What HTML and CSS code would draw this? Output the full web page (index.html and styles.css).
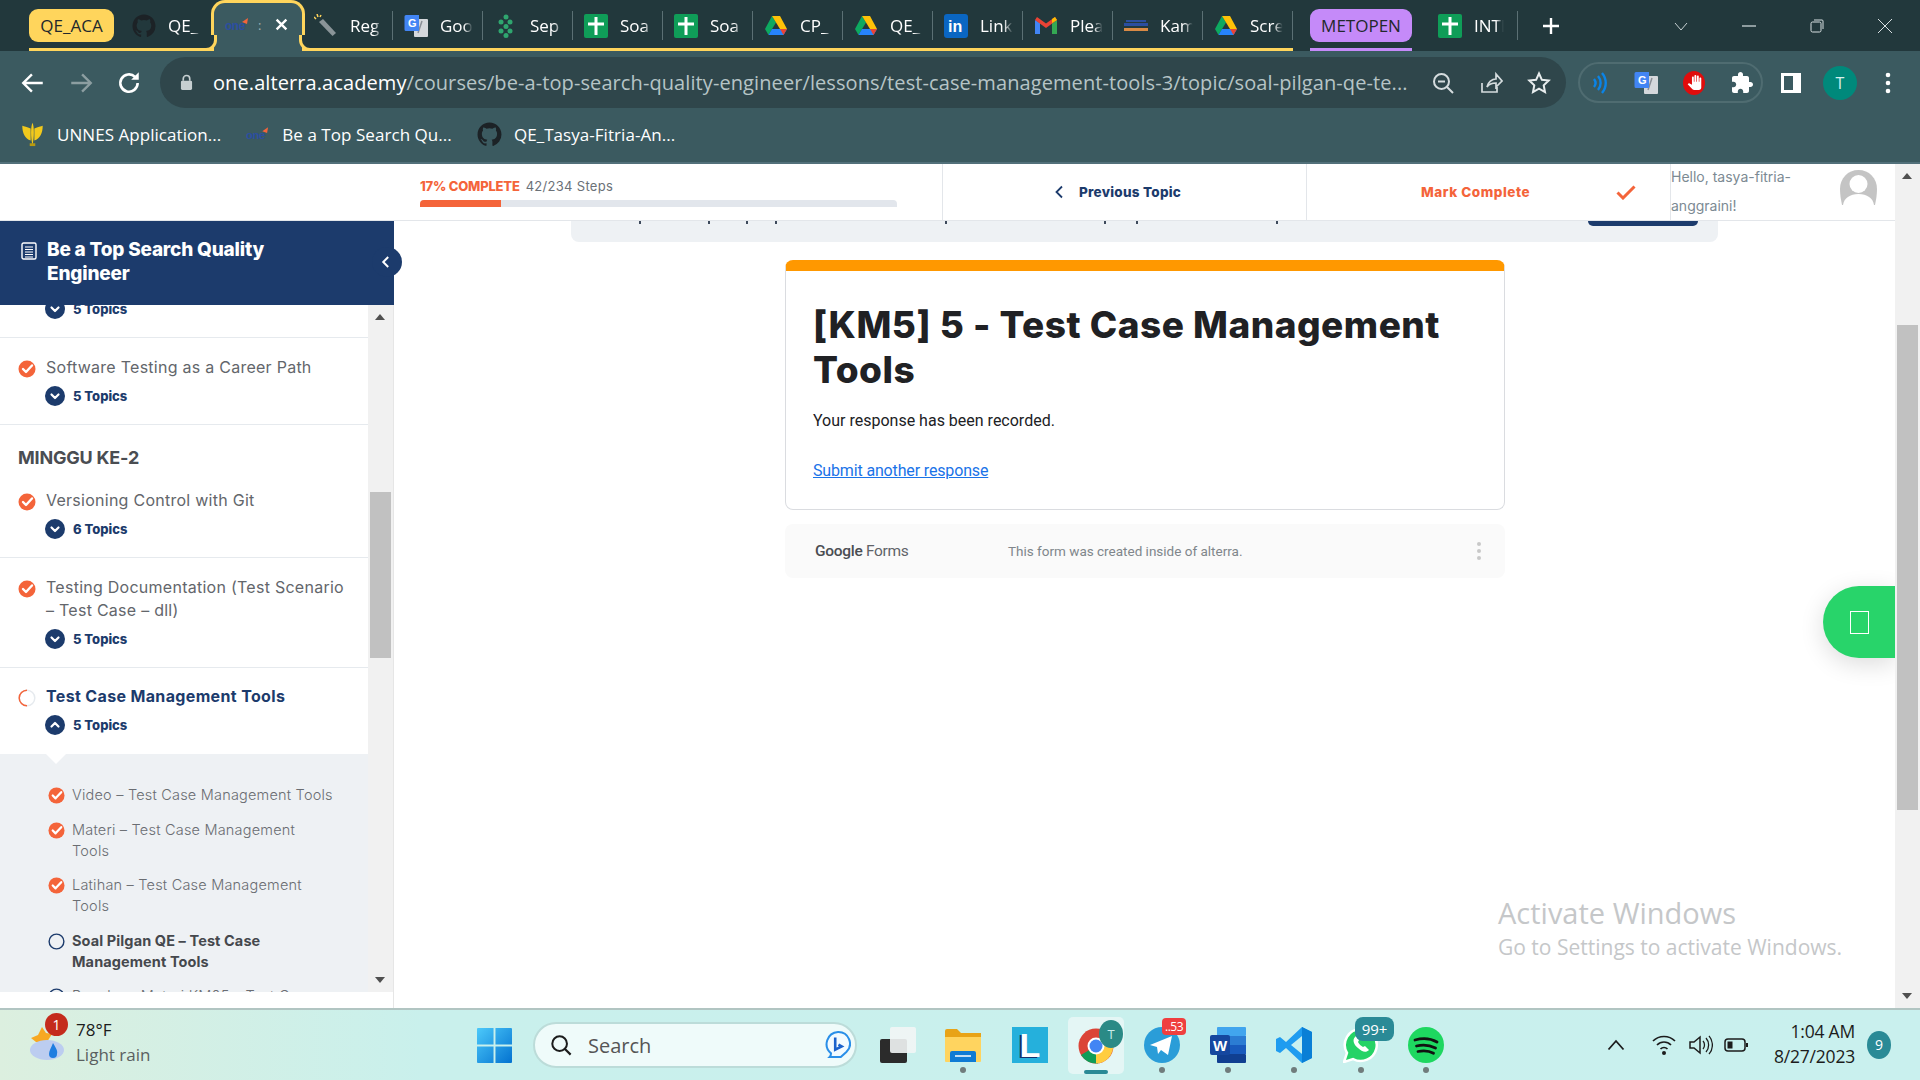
FILE: index.html
```html
<!DOCTYPE html>
<html lang="en">

<head>
    <meta charset="UTF-8">
    <title>Soal Pilgan QE - Test Case Management Tools</title>
    <link rel="stylesheet" href="styles.css">
</head>

<body>
    <svg class="defs" width="0" height="0">
        <symbol id="github" viewBox="0 0 24 24"><path d="M12 .5C5.65.5.5 5.65.5 12c0 5.08 3.29 9.39 7.86 10.91.58.1.79-.25.79-.56 0-.27-.01-1-.02-1.96-3.2.7-3.87-1.54-3.87-1.54-.52-1.33-1.28-1.68-1.28-1.68-1.04-.71.08-.7.08-.7 1.15.08 1.76 1.18 1.76 1.18 1.03 1.76 2.69 1.25 3.35.96.1-.74.4-1.25.73-1.54-2.55-.29-5.24-1.28-5.24-5.7 0-1.26.45-2.29 1.18-3.1-.12-.29-.51-1.46.11-3.05 0 0 .96-.31 3.15 1.18a10.9 10.9 0 0 1 5.74 0c2.19-1.49 3.15-1.18 3.15-1.18.62 1.59.23 2.76.11 3.05.74.81 1.18 1.84 1.18 3.1 0 4.43-2.7 5.41-5.26 5.69.41.36.78 1.06.78 2.14 0 1.54-.01 2.79-.01 3.17 0 .31.21.67.8.56A11.5 11.5 0 0 0 23.5 12C23.5 5.65 18.35.5 12 .5z" fill="#1c2226"/></symbol>
        <symbol id="sheet" viewBox="0 0 24 24"><rect x="0" y="0" width="24" height="24" rx="2" fill="#0f9d58"/><path d="M10.500 3h3v5.500H20v3h-6.500V21h-3v-9.500H4v-3h6.500z" fill="#fff"/></symbol>
        <symbol id="drive" viewBox="0 0 24 24"><path d="M8 2 1 15l3.500 6L12 8.500z" fill="#0da960"/><path d="M8 2h8l7 13h-7z" fill="#ffc107"/><path d="M4.500 21h15L23 15H8z" fill="#2684fc"/><path d="M19.500 21 23 15h-7z" fill="#ea4335"/></symbol>
        <symbol id="done" viewBox="0 0 18 18"><circle cx="9" cy="9" r="8.500" fill="#f4643a"/><path d="M5 9l3 3 6-6.500" fill="none" stroke="#fff" stroke-width="2.400" stroke-linecap="round" stroke-linejoin="round"/></symbol>
        <symbol id="down" viewBox="0 0 20 20"><circle cx="10" cy="10" r="10" fill="#1c3b6c"/><path d="M6.500 8.500 10 12l3.500-3.500" fill="none" stroke="#fff" stroke-width="2.200" stroke-linecap="round" stroke-linejoin="round"/></symbol>
        <symbol id="up" viewBox="0 0 20 20"><circle cx="10" cy="10" r="10" fill="#1c3b6c"/><path d="M6.500 11.500 10 8l3.500 3.500" fill="none" stroke="#fff" stroke-width="2.200" stroke-linecap="round" stroke-linejoin="round"/></symbol>
    </svg>

    <div class="tabstrip">
        <div class="tabs-first">
            <span class="group-chip yellow">QE_ACA</span>
            <div class="tab tab-git"><svg class="tab-icon"><use href="#github"/></svg><span class="tab-label">QE_</span></div>
        </div>
        <div class="tab-active">
            <svg class="fav-one" viewBox="0 0 24 16"><text x="0" y="13" class="one-letters">one</text><path d="M17 5l6-4-1 6z" fill="#f4643a"/></svg>
            <span class="tab-colon">:</span>
            <svg class="tab-close" viewBox="0 0 12 12"><path d="M1.500 1.500l9 9m0-9-9 9" stroke="#fff" stroke-width="2.200"/></svg>
        </div>
        <div class="tabs-yellow">
            <div class="tab"><svg class="tab-icon" viewBox="0 0 24 24"><path d="M5 8l4-3 13 14-3.500 3z" fill="#8a9498"/><path d="M2 5 0 3m4 0L3 0m3 3 1-2" stroke="#ffd55c" stroke-width="1.500"/></svg><span class="tab-label">Reg</span></div>
            <div class="tab"><svg class="tab-icon" viewBox="0 0 24 24"><rect x="10" y="5" width="14" height="18" rx="1" fill="#d5d8dc"/><path d="M14 19l4-12" stroke="#8a8f96" stroke-width="1.500"/><path d="M2 1h13v16H2a1.500 1.500 0 0 1-1.500-1.500v-13A1.500 1.500 0 0 1 2 1z" fill="#4285f4"/><text x="4" y="13" class="g-letter">G</text></svg><span class="tab-label">Goo</span></div>
            <div class="tab"><svg class="tab-icon" viewBox="0 0 24 24" fill="#2fa66f"><circle cx="12" cy="3" r="2.500"/><circle cx="7" cy="8" r="2.500"/><circle cx="16" cy="8" r="2.500"/><circle cx="12" cy="12.500" r="2.500"/><circle cx="7" cy="17" r="2.500"/><circle cx="16" cy="17" r="2.500"/><circle cx="12" cy="21.500" r="2.500"/></svg><span class="tab-label">Sep</span></div>
            <div class="tab"><svg class="tab-icon"><use href="#sheet"/></svg><span class="tab-label">Soa</span></div>
            <div class="tab"><svg class="tab-icon"><use href="#sheet"/></svg><span class="tab-label">Soa</span></div>
            <div class="tab"><svg class="tab-icon"><use href="#drive"/></svg><span class="tab-label">CP_</span></div>
            <div class="tab"><svg class="tab-icon"><use href="#drive"/></svg><span class="tab-label">QE_</span></div>
            <div class="tab"><svg class="tab-icon" viewBox="0 0 24 24"><rect width="24" height="24" rx="3" fill="#0a66c2"/><text x="4" y="18" class="in-letters">in</text></svg><span class="tab-label">Link</span></div>
            <div class="tab"><svg class="tab-icon" viewBox="0 0 24 24"><path d="M1 6v14h5V9z" fill="#4285f4"/><path d="M18 9v11h5V6z" fill="#34a853"/><path d="M1 6l11 8 11-8-2-3-9 6.500L3 3z" fill="#ea4335"/><path d="M18 9l5-3-2-3-3 2z" fill="#fbbc04"/></svg><span class="tab-label">Plea</span></div>
            <div class="tab"><svg class="tab-icon" viewBox="0 0 24 24"><rect x="2" y="6" width="20" height="2" fill="#2b4ea0"/><rect x="0" y="9" width="24" height="3" fill="#2b4ea0"/><rect x="0" y="14" width="24" height="3" fill="#d98a45"/></svg><span class="tab-label">Kam</span></div>
            <div class="tab"><svg class="tab-icon"><use href="#drive"/></svg><span class="tab-label">Scre</span></div>
        </div>
        <div class="group-purple"><span class="group-chip purple">METOPEN</span></div>
        <div class="tab tab-int"><svg class="tab-icon"><use href="#sheet"/></svg><span class="tab-label">INTI</span></div>
        <svg class="new-tab" viewBox="0 0 18 18"><path d="M9 1v16M1 9h16" stroke="#fff" stroke-width="2.400"/></svg>
        <div class="win-controls">
            <svg viewBox="0 0 14 14"><path d="M1 4l6 7 6-7" fill="none" stroke="#c8d2d4" stroke-width="1"/></svg>
            <svg viewBox="0 0 14 14"><path d="M0 7h14" stroke="#d8e0e2" stroke-width="1.200"/></svg>
            <svg viewBox="0 0 14 14"><rect x="1" y="3" width="10" height="10" rx="1.500" fill="none" stroke="#d8e0e2"/><path d="M4 1h8a1 1 0 0 1 1 1v8" fill="none" stroke="#d8e0e2"/></svg>
            <svg viewBox="0 0 14 14"><path d="M0 0l14 14M14 0 0 14" stroke="#d8e0e2" stroke-width="1"/></svg>
        </div>
    </div>

    <div class="toolbar">
        <svg class="nav-icon" viewBox="0 0 24 24"><path d="M21 12H4m7-8-8 8 8 8" fill="none" stroke="#fff" stroke-width="2.200"/></svg>
        <svg class="nav-icon" viewBox="0 0 24 24"><path d="M3 12h17m-7-8 8 8-8 8" fill="none" stroke="#8c9ea1" stroke-width="2.200"/></svg>
        <svg class="nav-icon" viewBox="0 0 24 24"><path d="M20 12a8 8 0 1 1-2.400-5.700" fill="none" stroke="#fff" stroke-width="2.400"/><path d="M21 2v7h-7z" fill="#fff"/></svg>
        <div class="omnibox">
            <svg class="lock" viewBox="0 0 14 18"><rect x="1" y="7" width="12" height="10" rx="1.500" fill="#c6cfd1"/><path d="M3.500 7V5a3.500 3.500 0 0 1 7 0v2" fill="none" stroke="#c6cfd1" stroke-width="1.800"/></svg>
            <div class="url"><span class="host">one.alterra.academy</span>/courses/be-a-top-search-quality-engineer/lessons/test-case-management-tools-3/topic/soal-pilgan-qe-te...</div>
            <svg class="omni-icon" viewBox="0 0 24 24"><circle cx="10.500" cy="10.500" r="7.500" fill="none" stroke="#d5dcde" stroke-width="2"/><path d="M16 16l6 6M7 10.500h7" stroke="#d5dcde" stroke-width="2"/></svg>
            <svg class="omni-icon" viewBox="0 0 24 24"><path d="M3 12v9h15v-5M8 16c1-5 5-8 9-8V3l6 7-6 6v-4c-4 0-7 1-9 4z" fill="none" stroke="#d5dcde" stroke-width="1.700"/></svg>
            <svg class="omni-icon" viewBox="0 0 24 24"><path d="M12 2.500l2.900 6.300 6.800.8-5 4.700 1.300 6.800-6-3.400-6 3.400 1.300-6.800-5-4.700 6.800-.8z" fill="none" stroke="#e8edee" stroke-width="2"/></svg>
        </div>
        <div class="ext-pill">
            <svg class="ext-icon" viewBox="0 0 24 24"><path d="M8 8c2 2.500 2 5.500 0 8M12 5c3.500 4 3.500 10 0 14M16 2c5 6 5 14 0 20" fill="none" stroke="#0a84e8" stroke-width="2.400"/></svg>
            <svg class="ext-icon" viewBox="0 0 24 24"><rect x="10" y="5" width="14" height="18" rx="1" fill="#d5d8dc"/><path d="M14 19l4-12" stroke="#8a8f96" stroke-width="1.500"/><path d="M2 1h13v16H2a1.500 1.500 0 0 1-1.500-1.500v-13A1.500 1.500 0 0 1 2 1z" fill="#4285f4"/><text x="4" y="13" class="g-letter">G</text></svg>
            <svg class="ext-icon" viewBox="0 0 24 24"><ellipse cx="12" cy="12" rx="11" ry="12" fill="#e00c0c"/><path transform="translate(5 4) scale(.62)" d="M23 5.500V20c0 2.200-1.800 4-4 4h-7.300c-1.080 0-2.100-.43-2.850-1.190L1 14.830s1.260-1.230 1.300-1.250c.22-.19.49-.29.79-.29.22 0 .42.06.6.16.04.01 4.310 2.460 4.310 2.460V4c0-.83.67-1.500 1.500-1.500S11 3.170 11 4v7h1V1.500c0-.83.67-1.500 1.500-1.500S15 .67 15 1.500V11h1V2.500c0-.83.67-1.500 1.500-1.500s1.500.67 1.500 1.500V11h1V5.500c0-.83.67-1.500 1.500-1.500s1.500.67 1.500 1.500z" fill="#fff"/></svg>
            <svg class="ext-icon" viewBox="0 0 24 24"><path d="M20.500 11H19V7c0-1.100-.9-2-2-2h-4V3.500C13 2.120 11.880 1 10.500 1S8 2.120 8 3.500V5H4c-1.100 0-1.990.9-1.990 2v3.800H3.500c1.490 0 2.700 1.210 2.700 2.700s-1.210 2.700-2.700 2.700H2V20c0 1.100.9 2 2 2h3.800v-1.500c0-1.490 1.210-2.700 2.700-2.700 1.490 0 2.700 1.210 2.700 2.700V22H17c1.100 0 2-.9 2-2v-4h1.500c1.380 0 2.500-1.120 2.500-2.500S21.880 11 20.500 11z" fill="#fff"/></svg>
        </div>
        <svg class="side-icon" viewBox="0 0 22 22"><path fill-rule="evenodd" d="M1 1h20v20H1zM4 4v14h9V4z" fill="#fff"/></svg>
        <span class="profile">T</span>
        <svg class="menu-dots" viewBox="0 0 6 22" fill="#fff"><circle cx="3" cy="3" r="2.300"/><circle cx="3" cy="11" r="2.300"/><circle cx="3" cy="19" r="2.300"/></svg>
    </div>

    <div class="bookmarks">
        <div class="bookmark">
            <svg class="bm-icon" viewBox="0 0 24 28"><path d="M12 2c-2 4-2 16 0 24 2-8 2-20 0-24zM10 8C6 6 3 6 1 5c0 8 3 14 9 16zM14 8c4-2 7-2 9-3 0 8-3 14-9 16z" fill="#f2c91c"/><path d="M9 24h6v3H9z" fill="#b99a10"/></svg>
            <span>UNNES Application...</span>
        </div>
        <div class="bookmark">
            <svg class="bm-icon bm-one" viewBox="0 0 24 16"><text x="0" y="13" class="one-letters">one</text><path d="M17 5l6-4-1 6z" fill="#f4643a"/></svg>
            <span>Be a Top Search Qu...</span>
        </div>
        <div class="bookmark">
            <svg class="bm-icon bm-git"><use href="#github"/></svg>
            <span>QE_Tasya-Fitria-An...</span>
        </div>
    </div>

    <main class="page">
        <div class="page-left">
            <header class="topbar">
                <div class="progress-cell">
                    <div class="progress-text"><b>17% COMPLETE</b> <span>42/234 Steps</span></div>
                    <div class="progress-track"><div class="progress-fill" style="width: 17%"></div></div>
                </div>
                <div class="prev-cell">
                    <svg viewBox="0 0 10 14"><path d="M8 1.500 2.500 7 8 12.500" fill="none" stroke="#1c3b6c" stroke-width="1.800"/></svg>
                    <span>Previous Topic</span>
                </div>
                <div class="mark-cell">
                    <span>Mark Complete</span>
                    <svg viewBox="0 0 20 16"><path d="M1.500 8.500 7 14 18.500 2.500" fill="none" stroke="#f4643a" stroke-width="3"/></svg>
                </div>
                <div class="hello-cell">
                    <div class="hello">Hello, tasya-fitria-anggraini!</div>
                    <svg class="avatar" viewBox="0 0 37 35"><path d="M18.500 0C8 0 0 8 0 19c0 6 1 11 2 16h33c1-5 2-10 2-16C37 8 29 0 18.500 0z" fill="#c4c4c4"/><circle cx="18.500" cy="14" r="9" fill="#fff"/><path d="M3 35c1-7 7-11 15.500-11S33 28 34 35z" fill="#fff"/></svg>
                </div>
            </header>

            <div class="body-row">
                <aside class="sidebar">
                    <div class="course-head">
                        <svg class="course-icon" viewBox="0 0 16 18"><rect x="1" y="1" width="14" height="16" rx="1.500" fill="none" stroke="#fff" stroke-width="1.400"/><path d="M4 5h8M4 7.500h8M4 10h8M4 12.500h8M4 15h8" stroke="#fff"/></svg>
                        <h2>Be a Top Search Quality Engineer</h2>
                        <span class="collapse">
                            <svg viewBox="0 0 10 14"><path d="M8 1.500 2.500 7 8 12.500" fill="none" stroke="#fff" stroke-width="2.200"/></svg>
                        </span>
                    </div>
                    <div class="sidebar-scroll">
                        <div class="lesson-list">
                            <div class="lesson lesson-cut">
                                <div class="topics"><svg><use href="#down"/></svg><span>5 Topics</span></div>
                            </div>
                            <div class="lesson">
                                <div class="lesson-title"><svg class="status"><use href="#done"/></svg><span>Software Testing as a Career Path</span></div>
                                <div class="topics"><svg><use href="#down"/></svg><span>5 Topics</span></div>
                            </div>
                            <h3 class="week">MINGGU KE-2</h3>
                            <div class="lesson">
                                <div class="lesson-title"><svg class="status"><use href="#done"/></svg><span>Versioning Control with Git</span></div>
                                <div class="topics"><svg><use href="#down"/></svg><span>6 Topics</span></div>
                            </div>
                            <div class="lesson">
                                <div class="lesson-title"><svg class="status"><use href="#done"/></svg><span>Testing Documentation (Test Scenario – Test Case – dll)</span></div>
                                <div class="topics"><svg><use href="#down"/></svg><span>5 Topics</span></div>
                            </div>
                            <div class="lesson lesson-open">
                                <div class="lesson-title current">
                                    <svg class="status" viewBox="0 0 18 18"><circle cx="9" cy="9" r="7.800" fill="none" stroke="#e6eaee" stroke-width="1.500"/><path d="M9 1.200A7.800 7.800 0 0 0 9 16.800" fill="none" stroke="#f4643a" stroke-width="1.500"/></svg>
                                    <span>Test Case Management Tools</span>
                                </div>
                                <div class="topics"><svg><use href="#up"/></svg><span>5 Topics</span></div>
                            </div>
                            <div class="subtopics">
                                <div class="subtopic"><svg><use href="#done"/></svg><span>Video – Test Case Management Tools</span></div>
                                <div class="subtopic"><svg><use href="#done"/></svg><span>Materi – Test Case Management Tools</span></div>
                                <div class="subtopic"><svg><use href="#done"/></svg><span>Latihan – Test Case Management Tools</span></div>
                                <div class="subtopic now"><svg viewBox="0 0 18 18"><circle cx="9" cy="9" r="7.800" fill="none" stroke="#1c3b6c" stroke-width="1.500"/></svg><span>Soal Pilgan QE – Test Case Management Tools</span></div>
                                <div class="subtopic"><svg viewBox="0 0 18 18"><circle cx="9" cy="9" r="7.800" fill="none" stroke="#1c3b6c" stroke-width="1.500"/></svg><span>Rangkum Materi KM05 – Test Case</span></div>
                            </div>
                        </div>
                        <div class="side-track">
                            <span class="arrow-up"></span>
                            <div class="side-thumb"></div>
                            <span class="arrow-down"></span>
                        </div>
                    </div>
                </aside>

                <section class="content">
                    <div class="notice">
                        <div class="notice-marks"><i></i><i></i><i></i><i></i><i></i><i></i><i></i><i></i></div>
                        <div class="notice-btn"></div>
                    </div>
                    <div class="form-card">
                        <h1>[KM5] 5 - Test Case Management Tools</h1>
                        <p>Your response has been recorded.</p>
                        <a href="#">Submit another response</a>
                    </div>
                    <div class="form-foot">
                        <div class="forms-logo"><span class="g">Google</span> Forms</div>
                        <div class="forms-note">This form was created inside of alterra.</div>
                        <svg class="forms-dots" viewBox="0 0 4 18" fill="#c8c8c8"><circle cx="2" cy="2" r="2"/><circle cx="2" cy="9" r="2"/><circle cx="2" cy="16" r="2"/></svg>
                    </div>
                    <div class="chat-float"><span></span></div>
                    <div class="watermark">
                        <div class="wm-title">Activate Windows</div>
                        <div class="wm-sub">Go to Settings to activate Windows.</div>
                    </div>
                </section>
            </div>
        </div>

        <div class="page-track">
            <span class="arrow-up"></span>
            <div class="page-thumb"></div>
            <span class="arrow-down"></span>
        </div>
    </main>

    <footer class="taskbar">
        <div class="tb-left">
            <div class="weather-icon">
                <svg viewBox="0 0 38 38"><path d="M14 4l4 6 6 1-5 8H8L3 15l7-3z" fill="#f7a823"/><ellipse cx="19" cy="27" rx="17" ry="10" fill="#bccdf0"/><path d="M25 20c3 5 5 8 4 11a4 4 0 0 1-8 0c0-3 2-6 4-11z" fill="#1f7ee0"/></svg>
                <span class="red-badge">1</span>
            </div>
            <div class="weather-text">
                <div class="temp">78°F</div>
                <div class="cond">Light rain</div>
            </div>
        </div>
        <div class="tb-center">
            <svg class="win-logo" viewBox="0 0 36 36"><defs><linearGradient id="winG" x1="0" y1="0" x2="1" y2="1"><stop offset="0" stop-color="#4cc9fa"/><stop offset="1" stop-color="#0372d0"/></linearGradient></defs><path d="M1 0h16v17H0V1a1 1 0 0 1 1-1zM19 0h16a1 1 0 0 1 1 1v16H19zM0 19h17v17H1a1 1 0 0 1-1-1zM19 19h17v16a1 1 0 0 1-1 1H19z" fill="url(#winG)"/></svg>
            <div class="search-box">
                <svg class="search-glass" viewBox="0 0 24 24"><circle cx="10.500" cy="10.500" r="8" fill="none" stroke="#1c1c1c" stroke-width="2.200"/><path d="M16 16l6.500 6.500" stroke="#1c1c1c" stroke-width="2.400"/></svg>
                <span>Search</span>
                <svg class="bing" viewBox="0 0 28 32"><path d="M14 2a12.500 12.500 0 0 1 9 21.500l-6 5.500H5c1-1 1.500-2.500 1.500-4A13 13 0 0 1 14 2z" fill="#f3fbff" stroke="#2a8fe8" stroke-width="2.200"/><path d="M11 8v13l7-3.500-3.500-2" fill="none" stroke="#1b62cc" stroke-width="2.800"/></svg>
            </div>
            <div class="app app-task"><svg viewBox="0 0 36 36"><rect x="0" y="12" width="27" height="24" rx="2" fill="#2b2b2b"/><rect x="10" y="0" width="26" height="26" rx="2" fill="#f2f5f5" fill-opacity=".9"/></svg></div>
            <div class="app app-folder running"><svg viewBox="0 0 36 36"><path d="M0 4a2 2 0 0 1 2-2h10l4 4h20v28H0z" fill="#e8a317"/><path d="M0 10h36v24a1 1 0 0 1-1 1H1a1 1 0 0 1-1-1z" fill="#ffd45f"/><path d="M5 35v-9a2 2 0 0 1 2-2h22a2 2 0 0 1 2 2v9z" fill="#0f7bd4"/><path d="M10 29h16" stroke="#fff" stroke-width="1.500"/></svg></div>
            <div class="app app-l"><span>L</span></div>
            <div class="app-tile">
                <svg viewBox="0 0 36 36"><circle cx="18" cy="18" r="17.500" fill="#db4437"/><path d="M18 18 3 27A17.500 17.500 0 0 0 20 35.400z" fill="#0f9d58"/><path d="M18 10.500h15.500A17.500 17.500 0 0 1 18 35.500z" fill="#ffcd40"/><circle cx="18" cy="18" r="8.500" fill="#fff"/><circle cx="18" cy="18" r="6.500" fill="#4285f4"/></svg>
                <span class="t-badge">T</span>
                <span class="tile-line"></span>
            </div>
            <div class="app app-tele running">
                <svg viewBox="0 0 36 36"><circle cx="18" cy="18" r="18" fill="#2a9dd8"/><path d="M6 18 28 9l-4 19-7-5-3 4-1-7z" fill="#fff"/></svg>
                <span class="tele-badge">..53</span>
            </div>
            <div class="app app-word running">
                <svg viewBox="0 0 36 36"><rect x="7" y="0" width="29" height="9" rx="1" fill="#41a5ee"/><rect x="7" y="9" width="29" height="9" fill="#2b7cd3"/><rect x="7" y="18" width="29" height="9" fill="#185abd"/><rect x="7" y="27" width="29" height="9" rx="1" fill="#103f91"/><rect x="0" y="8" width="20" height="20" rx="2" fill="#15479f"/><text x="3" y="24" class="w-letter">W</text></svg>
            </div>
            <div class="app app-code running">
                <svg viewBox="0 0 36 36"><path d="M26 0 36 5v26l-10 5L10 21l-6 5-4-2V12l4-2 6 5z" fill="#1f9cf0"/><path d="M26 9 15 18l11 9z" fill="#c8f1f0"/><path d="M26 0 36 5v26l-10 5z" fill="#0a7fd6"/></svg>
            </div>
            <div class="app app-wa running">
                <svg viewBox="0 0 36 36"><path d="M18 2a16 16 0 1 1-8 30L1 35l3-9A16 16 0 0 1 18 2z" fill="#25d366" stroke="#fff" stroke-width="2.500"/><path d="M12 10c-3 3-1 8 3 11 4 4 8 5 11 2l-4-4-2 1c-2-1-4-3-5-5l1-2-3-4z" fill="#fff"/></svg>
                <span class="wa-badge">99+</span>
            </div>
            <div class="app app-spot running">
                <svg viewBox="0 0 36 36"><circle cx="18" cy="18" r="18" fill="#1ed760"/><path d="M7 13c7-2 15-2 22 2M8.500 19c6-1.500 13-1 19 2M10 24.500c5-1 11-.8 15.500 1.800" fill="none" stroke="#111" stroke-width="2.800" stroke-linecap="round"/></svg>
            </div>
        </div>
        <div class="tb-right">
            <svg class="tray-caret" viewBox="0 0 18 12"><path d="M1.500 10.500 9 2l7.500 8.500" fill="none" stroke="#1c1c1c" stroke-width="1.800"/></svg>
            <svg class="tray" viewBox="0 0 26 24"><path d="M2 8c6-6 16-6 22 0M6 12c4-4 10-4 14 0M9.500 16c2-2 5-2 7 0" fill="none" stroke="#1c1c1c" stroke-width="1.700"/><circle cx="13" cy="20" r="2" fill="#1c1c1c"/></svg>
            <svg class="tray" viewBox="0 0 26 24"><path d="M3 9h4l6-5v16l-6-5H3z" fill="none" stroke="#1c1c1c" stroke-width="1.500"/><path d="M16 8c2 2 2 6 0 8M19 5c3.500 4 3.500 10 0 14M22 3c4.500 5 4.500 13 0 18" fill="none" stroke="#1c1c1c" stroke-width="1.300"/></svg>
            <svg class="tray" viewBox="0 0 26 24"><rect x="2" y="6" width="20" height="12" rx="3" fill="none" stroke="#1c1c1c" stroke-width="1.500"/><rect x="4.500" y="8.500" width="5" height="7" fill="#1c1c1c"/><path d="M24 10v4" stroke="#1c1c1c" stroke-width="2"/></svg>
            <div class="clock"><div>1:04 AM</div><div>8/27/2023</div></div>
            <span class="note-badge">9</span>
        </div>
    </footer>
</body>

</html>
```

FILE: styles.css
```css
* {
    box-sizing: border-box;
}

html,
body {
    margin: 0;
    padding: 0;
    width: 1920px;
    height: 1080px;
    overflow: hidden;
}

body {
    font-family: "Open Sans", "Noto Sans", sans-serif;
    background-color: #fff;
    display: flex;
    flex-direction: column;
}

.defs {
    position: absolute;
}

svg {
    display: block;
    flex: none;
}

/* browser tabs */
.tabstrip {
    height: 51px;
    background-color: #22383c;
    display: flex;
    align-items: flex-start;
    padding-left: 29px;
    color: #fff;
    font-size: 17px;
    flex: none;
}

.tabs-first {
    display: flex;
    height: 51px;
    border-bottom: 3px solid #ffd55c;
}

.group-chip {
    height: 33px;
    margin-top: 9px;
    border-radius: 9px;
    font-size: 17px;
    line-height: 33px;
    text-align: center;
    color: #22282c;
    display: block;
}

.group-chip.yellow {
    width: 85px;
    background-color: #ffd55c;
}

.group-chip.purple {
    width: 102px;
    background-color: #c58af9;
}

.tab {
    width: 90px;
    height: 33px;
    margin-top: 9px;
    display: flex;
    align-items: center;
    padding-left: 11px;
    position: relative;
}

.tab::after {
    content: "";
    position: absolute;
    right: 0;
    top: 2px;
    height: 29px;
    width: 1px;
    background-color: #5b7074;
}

.tab-icon {
    width: 24px;
    height: 24px;
}

.tab-label {
    margin-left: 12px;
    width: 34px;
    overflow: hidden;
    white-space: nowrap;
    -webkit-mask-image: linear-gradient(to right, #000 70%, transparent 96%);
    mask-image: linear-gradient(to right, #000 70%, transparent 96%);
}

.tab-git {
    width: 98px;
    padding-left: 18px;
}

.tab-git::after {
    display: none;
}

.tab-active {
    width: 94px;
    height: 51px;
    border: 3px solid #ffd55c;
    border-bottom: none;
    border-radius: 14px 14px 0 0;
    background-color: #3b5a60;
    display: flex;
    align-items: center;
    padding: 0 14px 5px 11px;
    margin-left: -1px;
    position: relative;
    z-index: 1;
}

.tab-active::before,
.tab-active::after {
    content: "";
    position: absolute;
    bottom: 0;
    width: 13px;
    height: 13px;
    background-color: #22383c;
    border-bottom: 3px solid #ffd55c;
}

.tab-active::before {
    left: -13px;
    border-right: 3px solid #ffd55c;
    border-radius: 0 0 11px 0;
}

.tab-active::after {
    right: -13px;
    border-left: 3px solid #ffd55c;
    border-radius: 0 0 0 11px;
}

.fav-one {
    width: 24px;
    height: 16px;
}

.tab-colon {
    margin-left: 9px;
    font-size: 13px;
    color: #9fb0b3;
}

.tab-close {
    margin-left: auto;
    width: 13px;
    height: 13px;
}

.tabs-yellow {
    display: flex;
    height: 51px;
    border-bottom: 3px solid #ffd55c;
    margin: 0 17px 0 -2px;
}

.group-purple {
    height: 51px;
    width: 102px;
    border-bottom: 3px solid #c58af9;
}

.tab-int {
    margin-left: 15px;
    width: 91px;
}

.tab-int .tab-label {
    width: 31px;
}

.new-tab {
    width: 18px;
    height: 18px;
    margin: 17px 0 0 24px;
}

.win-controls {
    margin-left: auto;
    margin-top: 19px;
    display: flex;
    gap: 54px;
    padding-right: 28px;
}

.win-controls svg {
    width: 14px;
    height: 14px;
}

/* address bar */
.toolbar {
    height: 57px;
    background-color: #3b5a60;
    display: flex;
    align-items: center;
    padding: 6px 0 0 20px;
    flex: none;
}

.nav-icon {
    width: 26px;
    height: 26px;
    margin-right: 22px;
}

.omnibox {
    width: 1406px;
    height: 51px;
    margin-left: -4px;
    border-radius: 26px;
    background-color: #2f464b;
    display: flex;
    align-items: center;
    padding-left: 20px;
    color: #b6c4c6;
}

.lock {
    width: 13px;
    height: 17px;
}

.url {
    margin-left: 20px;
    width: 1194px;
    font-size: 20px;
    white-space: nowrap;
    overflow: hidden;
    letter-spacing: 0.09px;
}

.host {
    color: #fff;
}

.omni-icon {
    width: 24px;
    height: 24px;
    margin-left: 24px;
}

.ext-pill {
    width: 185px;
    height: 41px;
    margin-left: 12px;
    border: 2px solid #4f6c71;
    border-radius: 21px;
    display: flex;
    align-items: center;
    gap: 24px;
    padding-left: 6px;
}

.ext-icon {
    width: 24px;
    height: 24px;
}

.side-icon {
    width: 22px;
    height: 22px;
    margin-left: 17px;
}

.profile {
    width: 34px;
    height: 34px;
    margin-left: 21px;
    border-radius: 50%;
    background-color: #00897b;
    color: #d7f0ec;
    font-size: 16px;
    line-height: 34px;
    text-align: center;
}

.menu-dots {
    width: 6px;
    height: 22px;
    margin-left: 28px;
}

/* bookmarks */
.bookmarks {
    height: 56px;
    background-color: #3b5a60;
    display: flex;
    align-items: center;
    padding: 0 0 2px 21px;
    color: #fff;
    font-size: 17px;
    letter-spacing: 0.05px;
    flex: none;
    border-bottom: 2px solid #52707a;
}

.bookmark {
    display: flex;
    align-items: center;
    margin-right: 25px;
}

.bm-icon {
    width: 23px;
    height: 26px;
    margin-right: 13px;
}

.bm-one {
    height: 16px;
}

.bm-git {
    width: 25px;
    height: 25px;
    margin-right: 12px;
}

/* page */
.page {
    flex: 1;
    height: 844px;
    display: flex;
    min-height: 0;
}

.page-left {
    width: 1895px;
    display: flex;
    flex-direction: column;
}

.topbar {
    height: 57px;
    border-bottom: 1px solid #e3e6ea;
    display: flex;
    background-color: #fff;
    position: relative;
    z-index: 2;
    flex: none;
}

.progress-cell {
    width: 942px;
    padding: 12px 0 0 420px;
}

.progress-text {
    font-family: Inter, sans-serif;
    font-size: 13px;
    line-height: 20px;
    white-space: nowrap;
    color: #6b7178;
    letter-spacing: 0.3px;
}

.progress-text b {
    color: #f4643a;
    font-weight: 800;
    letter-spacing: -0.2px;
}

.progress-text span {
    margin-left: 2px;
}

.progress-track {
    width: 477px;
    height: 7px;
    margin-top: 4px;
    border-radius: 4px 4px 0 0;
    background-color: #e2e6ec;
    overflow: hidden;
}

.progress-fill {
    height: 100%;
    background-color: #f4643a;
}

.prev-cell {
    width: 364px;
    border-left: 1px solid #e3e6ea;
    display: flex;
    align-items: center;
    padding: 0 0 1px 111px;
    font-family: Inter, sans-serif;
    font-size: 13.500px;
    font-weight: 800;
    color: #1c3b6c;
    letter-spacing: 0.25px;
}

.prev-cell svg {
    width: 10px;
    height: 14px;
    margin-right: 15px;
}

.mark-cell {
    width: 364px;
    border-left: 1px solid #e3e6ea;
    display: flex;
    align-items: center;
    padding: 0 0 1px 114px;
    font-family: Inter, sans-serif;
    font-size: 13.500px;
    font-weight: 800;
    color: #f4643a;
    letter-spacing: 0.55px;
}

.mark-cell svg {
    width: 20px;
    height: 16px;
    margin-left: 86px;
}

.hello-cell {
    width: 225px;
    border-left: 1px solid #e3e6ea;
    display: flex;
    padding-left: 0;
}

.hello {
    width: 140px;
    margin-top: -2px;
    font-family: Inter, sans-serif;
    font-size: 14px;
    line-height: 29px;
    color: #7c8a93;
}

.avatar {
    width: 37px;
    height: 35px;
    margin: 6px 0 0 29px;
}

.body-row {
    flex: 1;
    display: flex;
    min-height: 0;
}

/* course sidebar */
.sidebar {
    width: 394px;
    border-right: 1px solid #e6e6e6;
    display: flex;
    flex-direction: column;
    padding-bottom: 16px;
    flex: none;
    position: relative;
    z-index: 1;
}

.course-head {
    height: 84px;
    background-color: #1c3b6c;
    display: flex;
    padding: 17px 60px 0 21px;
    position: relative;
    z-index: 1;
    flex: none;
    width: 394px;
}

.course-icon {
    width: 16px;
    height: 18px;
    margin-top: 4px;
}

.course-head h2 {
    margin: 0 0 0 10px;
    font-family: Inter, sans-serif;
    font-size: 19px;
    line-height: 24px;
    font-weight: 800;
    color: #fff;
    letter-spacing: -0.2px;
}

.collapse {
    position: absolute;
    left: 372px;
    top: 26px;
    width: 30px;
    height: 30px;
    border-radius: 50%;
    background-color: #1c3b6c;
    display: flex;
    align-items: center;
    padding-left: 9px;
}

.collapse svg {
    width: 9px;
    height: 14px;
}

.sidebar-scroll {
    flex: 1;
    display: flex;
    min-height: 0;
}

.lesson-list {
    width: 368px;
    overflow: hidden;
    font-family: Inter, sans-serif;
    flex: none;
    background-color: #fff;
}

.lesson {
    padding: 17px 0 18px 18px;
    border-bottom: 1px solid #e6eaee;
}

.lesson-cut {
    margin-top: -6px;
    padding-top: 0;
}

.lesson-open {
    padding-top: 16px;
    padding-bottom: 19px;
    border-bottom: none;
}

.lesson-title {
    display: flex;
    margin-top: 1px;
    font-size: 16px;
    line-height: 23px;
    color: #63666b;
    letter-spacing: 0.26px;
}

.lesson-title span {
    max-width: 306px;
}

.lesson-title .status {
    width: 18px;
    height: 18px;
    margin: 4px 10px 0 0;
}

.lesson-title.current {
    color: #1c3b6c;
    font-weight: 700;
    letter-spacing: 0.35px;
}

.topics {
    display: flex;
    align-items: center;
    margin: 7px 0 0 27px;
    font-size: 13px;
    font-weight: 800;
    color: #1c3b6c;
}

.lesson-cut .topics {
    margin-top: 0;
}

.topics svg {
    width: 20px;
    height: 20px;
    margin-right: 8px;
}

.week {
    margin: 0;
    padding: 21px 0 1px 18px;
    font-size: 18px;
    line-height: 24px;
    font-weight: 700;
    color: #4a4d52;
    letter-spacing: -0.2px;
}

.subtopics {
    background-color: #eef1f4;
    padding: 30px 18px 0 47px;
    display: flex;
    flex-direction: column;
    gap: 13.500px;
    position: relative;
}

.subtopics::before {
    content: "";
    position: absolute;
    left: 46px;
    top: 0;
    border-left: 10px solid transparent;
    border-right: 10px solid transparent;
    border-top: 10px solid #fff;
}

.subtopic {
    display: flex;
    font-size: 14.500px;
    line-height: 21px;
    color: #6a6d72;
    font-weight: 300;
    letter-spacing: 0.2px;
}

.subtopic span {
    max-width: 261px;
}

.subtopic svg {
    width: 17px;
    height: 17px;
    margin: 3px 7px 0 1px;
}

.subtopic.now {
    font-weight: 700;
    color: #45484d;
    letter-spacing: 0.1px;
}

.side-track {
    width: 25px;
    background-color: #f1f1f1;
    position: relative;
    flex: none;
    padding: 187px 2px 0 2px;
}

.side-thumb {
    height: 166px;
    background-color: #c1c1c1;
}

.arrow-up,
.arrow-down {
    position: absolute;
    left: 7px;
    border-left: 5.500px solid transparent;
    border-right: 5.500px solid transparent;
}

.arrow-up {
    top: 9px;
    border-bottom: 6px solid #505050;
}

.arrow-down {
    bottom: 9px;
    border-top: 6px solid #505050;
}

/* main content */
.content {
    flex: 1;
    position: relative;
    padding-left: 391px;
}

.notice {
    width: 1147px;
    height: 21px;
    margin-left: -214px;
    background-color: #eef1f4;
    border-radius: 0 0 8px 8px;
    position: relative;
}

.notice-marks {
    display: flex;
    height: 3px;
}

.notice-marks i {
    width: 2px;
    height: 3px;
    background-color: #3e4a5c;
}

.notice-marks i:nth-child(1) { margin-left: 68px; }
.notice-marks i:nth-child(2) { margin-left: 67px; }
.notice-marks i:nth-child(3) { margin-left: 36px; }
.notice-marks i:nth-child(4) { margin-left: 27px; }
.notice-marks i:nth-child(5) { margin-left: 168px; }
.notice-marks i:nth-child(6) { margin-left: 157px; }
.notice-marks i:nth-child(7) { margin-left: 30px; }
.notice-marks i:nth-child(8) { margin-left: 138px; }

.notice-btn {
    position: absolute;
    left: 1017px;
    top: 0;
    width: 110px;
    height: 5px;
    border-radius: 0 0 8px 8px;
    background-color: #1c3b6c;
}

.form-card {
    width: 720px;
    height: 250px;
    margin-top: 18px;
    border: 1px solid #dadce0;
    border-top: 11px solid #ff9800;
    border-radius: 8px;
    padding: 31px 26px 0 27px;
}

.form-card h1 {
    margin: 0;
    font-family: Inter, sans-serif;
    font-size: 37px;
    line-height: 45px;
    font-weight: 800;
    color: #202124;
    letter-spacing: 0.5px;
}

.form-card p {
    margin: 17px 0 0 0;
    font-family: Roboto, sans-serif;
    font-size: 16px;
    line-height: 24px;
    color: #202124;
}

.form-card a {
    display: inline-block;
    margin-top: 26px;
    font-family: Roboto, sans-serif;
    font-size: 16px;
    line-height: 24px;
    color: #1a73e8;
    letter-spacing: -0.15px;
}

.form-foot {
    width: 720px;
    height: 54px;
    margin-top: 14px;
    border-radius: 8px;
    background-color: #fafafa;
    display: flex;
    align-items: center;
    padding-left: 30px;
}

.forms-logo {
    width: 193px;
    font-family: Roboto, sans-serif;
    font-size: 15.500px;
    color: #5f6368;
    letter-spacing: -0.3px;
}

.forms-logo .g {
    font-weight: 500;
    color: #4a4d52;
}

.forms-note {
    width: 469px;
    font-family: Roboto, sans-serif;
    font-size: 13.500px;
    color: #80868b;
}

.forms-dots {
    width: 4px;
    height: 18px;
}

.chat-float {
    position: absolute;
    right: 0;
    top: 365px;
    width: 72px;
    height: 72px;
    border-radius: 36px 0 0 36px;
    background-color: #28d46a;
    box-shadow: 0 6px 24px rgba(0, 0, 0, 0.14);
    display: flex;
    align-items: center;
    padding-left: 27px;
}

.chat-float span {
    width: 19px;
    height: 23px;
    border: 1px solid #fff;
}

.watermark {
    position: absolute;
    right: 50px;
    top: 673px;
    width: 347px;
    font-family: "Open Sans", sans-serif;
    color: #c5c7c9;
}

.wm-title {
    font-size: 29px;
    line-height: 38px;
}

.wm-sub {
    font-size: 21px;
    line-height: 30px;
    white-space: nowrap;
}

.page-track {
    width: 25px;
    background-color: #f1f1f1;
    position: relative;
    padding: 161px 2px 0 2px;
    flex: none;
}

.page-thumb {
    height: 485px;
    background-color: #c1c1c1;
}

/* windows taskbar */
.taskbar {
    height: 72px;
    flex: none;
    border-top: 2px solid #b1c5c2;
    background: linear-gradient(90deg, #dcefdf 0%, #c9f0ec 22%, #c9f0ee 100%);
    display: flex;
    align-items: center;
}

.tb-left {
    width: 477px;
    display: flex;
    padding-left: 28px;
    flex: none;
}

.weather-icon {
    width: 38px;
    height: 38px;
    position: relative;
}

.red-badge {
    position: absolute;
    left: 17px;
    top: -10px;
    width: 23px;
    height: 23px;
    border-radius: 50%;
    background-color: #c42b1c;
    color: #fff;
    font-size: 14px;
    line-height: 23px;
    text-align: center;
}

.weather-text {
    margin: -6px 0 0 10px;
    font-size: 17px;
    line-height: 25px;
}

.temp {
    color: #1c1c1c;
}

.cond {
    color: #5a5f60;
}

.tb-center {
    display: flex;
    align-items: center;
    flex: none;
    width: 967px;
}

.win-logo {
    width: 35px;
    height: 35px;
}

.search-box {
    width: 328px;
    height: 46px;
    margin-left: 21px;
    border-radius: 23px;
    background-color: #effbfa;
    border: 2px solid #bcdcd9;
    display: flex;
    align-items: center;
    padding-left: 15px;
    font-size: 20px;
    color: #555;
}

.search-glass {
    width: 22px;
    height: 22px;
    margin-right: 16px;
}

.bing {
    width: 26px;
    height: 30px;
    margin-left: auto;
    margin-right: 4px;
}

.app {
    width: 36px;
    height: 36px;
    position: relative;
    flex: none;
}

.app svg {
    width: 36px;
    height: 36px;
}

.app.running::after {
    content: "";
    position: absolute;
    left: 15px;
    top: 40px;
    width: 6px;
    height: 6px;
    border-radius: 50%;
    background-color: #707c7c;
}

.app-task {
    margin-left: 23px;
}

.app-folder {
    margin-left: 29px;
}

.app-l {
    margin-left: 31px;
    background-color: #25b0dc;
    color: #fff;
    font-family: "Liberation Sans", sans-serif;
    font-weight: 700;
    font-size: 34px;
    line-height: 36px;
    text-align: center;
    text-shadow: -2px 1px 0 #14306c;
}

.app-tile {
    width: 56px;
    height: 57px;
    margin-left: 20px;
    border-radius: 5px;
    background-color: #e4f6f5;
    position: relative;
    padding: 11px 0 0 10px;
    flex: none;
}

.app-tile svg {
    width: 36px;
    height: 36px;
}

.t-badge {
    position: absolute;
    left: 31px;
    top: 3px;
    width: 24px;
    height: 28px;
    border-radius: 50%;
    background-color: #2a8a86;
    color: #c8ecea;
    font-size: 13px;
    line-height: 28px;
    text-align: center;
}

.tile-line {
    position: absolute;
    left: 16px;
    bottom: 0;
    width: 24px;
    height: 4px;
    border-radius: 2px;
    background-color: #2a8a96;
}

.app-tele {
    margin-left: 20px;
}

.tele-badge {
    position: absolute;
    left: 18px;
    top: -9px;
    width: 24px;
    height: 17px;
    border-radius: 4px;
    background-color: #ef3f3f;
    color: #fff;
    font-size: 12px;
    line-height: 17px;
    text-align: center;
    letter-spacing: -0.5px;
}

.app-word {
    margin-left: 30px;
}

.app-code {
    margin-left: 30px;
}

.app-wa {
    margin-left: 31px;
}

.wa-badge {
    position: absolute;
    left: 12px;
    top: -10px;
    width: 39px;
    height: 24px;
    border-radius: 8px;
    background-color: #2a8a96;
    color: #fff;
    font-size: 15px;
    line-height: 24px;
    text-align: center;
}

.app-spot {
    margin-left: 29px;
}

.tb-right {
    flex: 1;
    display: flex;
    align-items: center;
    padding-left: 163px;
}

.tray-caret {
    width: 18px;
    height: 12px;
    margin-right: 26px;
}

.tray {
    width: 26px;
    height: 24px;
    margin-right: 10px;
}

.clock {
    width: 96px;
    margin-top: -2px;
    text-align: right;
    font-size: 17.500px;
    line-height: 25px;
    color: #1c1c1c;
    letter-spacing: -0.2px;
    white-space: nowrap;
}

.note-badge {
    width: 24px;
    height: 28px;
    margin-left: 12px;
    border-radius: 50%;
    background-color: #2a8a96;
    color: #fff;
    font-size: 14px;
    line-height: 28px;
    text-align: center;
}

/* letters inside the small icons */
.g-letter {
    font: 700 11px "Liberation Sans", sans-serif;
    fill: #fff;
}

.one-letters {
    font: 700 12px "Liberation Sans", sans-serif;
    fill: #2b4ea0;
    letter-spacing: -0.5px;
}

.in-letters {
    font: 700 16px "Liberation Sans", sans-serif;
    fill: #fff;
}

.w-letter {
    font: 700 15px "Liberation Sans", sans-serif;
    fill: #fff;
}
```
